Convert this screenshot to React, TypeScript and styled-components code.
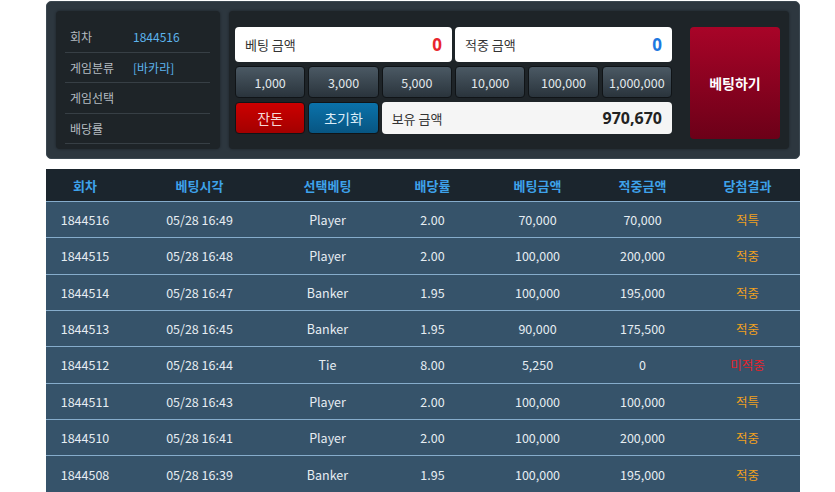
import styled, { createGlobalStyle } from "styled-components";

const GlobalStyle = createGlobalStyle`
  body {
    margin: 0;
    background: #ffffff;
    font-family: "Noto Sans CJK KR", "Noto Sans", sans-serif;
  }
`;

const Page = styled.div`
  width: 754px;
  padding: 1px 0 0 46px;
`;

const BetPanel = styled.div`
  display: flex;
  gap: 9px;
  height: 158px;
  box-sizing: border-box;
  padding: 9px 10px 9px 9px;
  background: #2d373f;
  border: 1px solid #3b4750;
  border-radius: 5px;
`;

const InfoBox = styled.div`
  width: 164px;
  box-sizing: border-box;
  padding: 11px 10px 0 9px;
  background: #1e2428;
  border-radius: 4px;
  box-shadow: 0 0 3px rgba(0, 0, 0, 0.4);
`;

const InfoRow = styled.div`
  display: flex;
  align-items: center;
  height: 29.5px;
  border-bottom: 1px solid #373f45;
  padding-left: 5px;
  font-size: 12px;
`;

const InfoLabel = styled.span`
  width: 63px;
  color: #b5bcc1;
`;

const InfoValue = styled.span`
  color: #5db4ee;
`;

const ControlBox = styled.div`
  flex: 1;
  display: flex;
  gap: 18px;
  padding: 16px 9px 0 6px;
  background: #1e2428;
  border-radius: 4px;
  box-shadow: 0 0 3px rgba(0, 0, 0, 0.4);
`;

const ControlGrid = styled.div`
  width: 437px;
  display: grid;
  grid-template-columns: repeat(6, 1fr);
  grid-template-rows: 35px 32px 32px;
  column-gap: 3px;
  row-gap: 4px;
  align-content: start;
`;

const AmountField = styled.div<{ $span: number; $muted?: boolean }>`
  grid-column: span ${({ $span }) => $span};
  display: flex;
  align-items: center;
  justify-content: space-between;
  padding: 0 10px;
  background: ${({ $muted }) => ($muted ? "#f5f5f5" : "#ffffff")};
  border-radius: 4px;
  font-size: 13px;
  color: #333;
`;

const AmountValue = styled.span<{ $color: string; $size: number }>`
  font-family: "Noto Sans", sans-serif;
  font-weight: 700;
  font-size: ${({ $size }) => $size}px;
  color: ${({ $color }) => $color};
`;

const ChipButton = styled.button<{ $tone?: "dark" | "red" | "blue" }>`
  display: flex;
  align-items: center;
  justify-content: center;
  padding: 0;
  border: 1px solid #101417;
  border-radius: 4px;
  font-family: "Noto Sans CJK KR", "Noto Sans", sans-serif;
  font-size: ${({ $tone }) => ($tone === "dark" || !$tone ? "12.5px" : "14px")};
  color: ${({ $tone }) =>
    $tone === "red" ? "#f6d8d8" : $tone === "blue" ? "#d9ecf7" : "#e2e8ec"};
  background: ${({ $tone }) =>
    $tone === "red"
      ? "linear-gradient(#cc0000, #a30000)"
      : $tone === "blue"
      ? "linear-gradient(#0b72aa, #075582)"
      : "linear-gradient(#4b5964, #2a343c)"};
`;

const BetButton = styled.button`
  width: 90px;
  height: 112px;
  border: none;
  border-radius: 4px;
  background: linear-gradient(#a80428, #6c0018);
  color: #ffffff;
  font-family: "Noto Sans CJK KR", sans-serif;
  font-weight: 700;
  font-size: 14px;
`;

const HistoryTable = styled.table`
  width: 754px;
  margin-top: 10px;
  border-collapse: collapse;
  table-layout: fixed;
  font-size: 12.5px;
`;

const HeadCell = styled.th<{ $w: number }>`
  width: ${({ $w }) => $w}px;
  height: 32px;
  padding: 0;
  background: #1b252d;
  color: #3ea2ea;
  font-size: 13px;
  font-weight: 700;
`;

const Row = styled.tr`
  height: 36.33px;
  background: #36536a;
`;

const Cell = styled.td<{ $color?: string }>`
  padding: 0;
  text-align: center;
  border-top: 1px solid #86accb;
  color: ${({ $color }) => $color ?? "#e6edf2"};
`;

const columns = [
  { label: "회차", w: 78 },
  { label: "베팅시각", w: 151 },
  { label: "선택베팅", w: 105 },
  { label: "배당률", w: 105 },
  { label: "베팅금액", w: 105 },
  { label: "적중금액", w: 105 },
  { label: "당첨결과", w: 105 },
];

const history = [
  ["1844516", "05/28 16:49", "Player", "2.00", "70,000", "70,000", "적특"],
  ["1844515", "05/28 16:48", "Player", "2.00", "100,000", "200,000", "적중"],
  ["1844514", "05/28 16:47", "Banker", "1.95", "100,000", "195,000", "적중"],
  ["1844513", "05/28 16:45", "Banker", "1.95", "90,000", "175,500", "적중"],
  ["1844512", "05/28 16:44", "Tie", "8.00", "5,250", "0", "미적중"],
  ["1844511", "05/28 16:43", "Player", "2.00", "100,000", "100,000", "적특"],
  ["1844510", "05/28 16:41", "Player", "2.00", "100,000", "200,000", "적중"],
  ["1844508", "05/28 16:39", "Banker", "1.95", "100,000", "195,000", "적중"],
];

const chips = ["1,000", "3,000", "5,000", "10,000", "100,000", "1,000,000"];

export default function App() {
  return (
    <Page>
      <GlobalStyle />
      <BetPanel>
        <InfoBox>
          <InfoRow>
            <InfoLabel>회차</InfoLabel>
            <InfoValue>1844516</InfoValue>
          </InfoRow>
          <InfoRow>
            <InfoLabel>게임분류</InfoLabel>
            <InfoValue>[바카라]</InfoValue>
          </InfoRow>
          <InfoRow>
            <InfoLabel>게임선택</InfoLabel>
          </InfoRow>
          <InfoRow>
            <InfoLabel>배당률</InfoLabel>
          </InfoRow>
        </InfoBox>
        <ControlBox>
          <ControlGrid>
            <AmountField $span={3}>
              베팅 금액
              <AmountValue $color="#e8262d" $size={17}>0</AmountValue>
            </AmountField>
            <AmountField $span={3}>
              적중 금액
              <AmountValue $color="#1d78e0" $size={17}>0</AmountValue>
            </AmountField>
            {chips.map((c) => (
              <ChipButton key={c}>{c}</ChipButton>
            ))}
            <ChipButton $tone="red">잔돈</ChipButton>
            <ChipButton $tone="blue">초기화</ChipButton>
            <AmountField $span={4} $muted>
              보유 금액
              <AmountValue $color="#222" $size={16}>970,670</AmountValue>
            </AmountField>
          </ControlGrid>
          <BetButton>베팅하기</BetButton>
        </ControlBox>
      </BetPanel>
      <HistoryTable>
        <thead>
          <tr>
            {columns.map((c) => (
              <HeadCell key={c.label} $w={c.w}>
                {c.label}
              </HeadCell>
            ))}
          </tr>
        </thead>
        <tbody>
          {history.map((r) => (
            <Row key={r[0]}>
              {r.map((v, i) => (
                <Cell
                  key={i}
                  $color={
                    i === 6 ? (v === "미적중" ? "#e3242b" : "#f0a020") : undefined
                  }
                >
                  {v}
                </Cell>
              ))}
            </Row>
          ))}
        </tbody>
      </HistoryTable>
    </Page>
  );
}
